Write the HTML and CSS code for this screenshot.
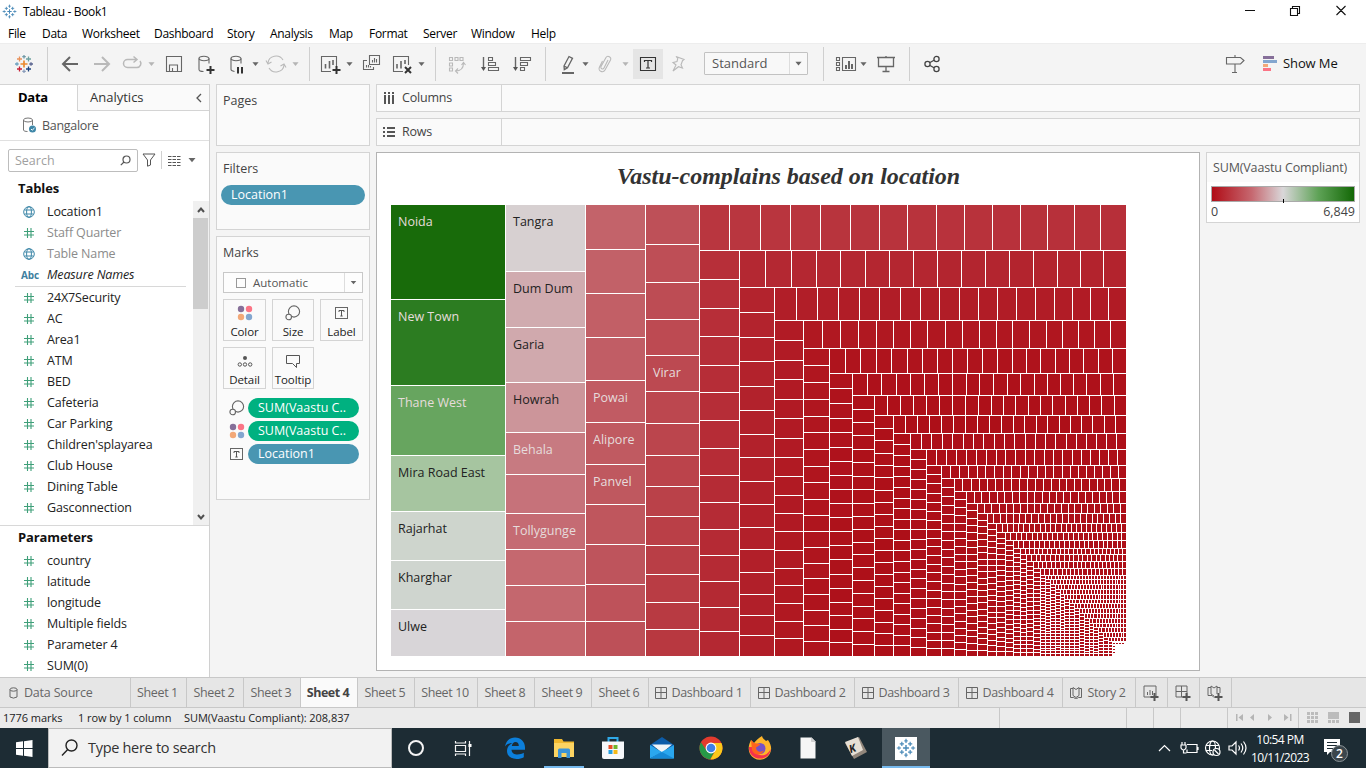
FILE: index.html
```html
<!DOCTYPE html>
<html lang="en">
<head>
<meta charset="utf-8">
<title>Tableau - Book1</title>
<link rel="stylesheet" href="styles.css">
</head>
<body>
<svg class="defs" width="0" height="0">
  <defs>
    <symbol id="caret" viewBox="0 0 8 24"><path d="M.5 10h7l-3.500 4.200z" fill="currentColor"/></symbol>
    <symbol id="hash" viewBox="0 0 12 12"><path d="M4.5 1v10M8 1v10M1 4.5h10M1 8h10" stroke="#3f9f79" stroke-width="1.1" fill="none"/></symbol>
    <symbol id="globe" viewBox="0 0 12 12"><g fill="none" stroke="#3e87a8" stroke-width="1"><circle cx="6" cy="6" r="5.300"/><ellipse cx="6" cy="6" rx="2.4" ry="5.300"/><path d="M1.5 4h9M1.5 8h9"/></g></symbol>
    <symbol id="size" viewBox="0 0 16 16"><g fill="none" stroke="#666" stroke-width="1.1"><circle cx="9" cy="6.500" r="5.600"/><circle cx="3.700" cy="12" r="2.800" fill="#fafafa"/></g></symbol>
    <symbol id="color" viewBox="0 0 16 16"><circle cx="4" cy="4" r="3.200" fill="#866f99"/><circle cx="12" cy="4" r="3.200" fill="#fb7485"/><circle cx="4" cy="12" r="3.200" fill="#f2a878"/><circle cx="12" cy="12" r="3.200" fill="#83a6cf"/></symbol>
    <symbol id="label" viewBox="0 0 16 16"><rect x="1.5" y="2.5" width="12" height="11" fill="none" stroke="#666"/><path d="M5 7V5.500h5V7M7.500 5.500v5.500M6.300 11h2.400" fill="none" stroke="#555"/></symbol>
    <symbol id="grid" viewBox="0 0 12 12"><path d="M.5.5h11v11H.5zM6 .5v11M.5 5.500h11" fill="none" stroke="#666"/></symbol>
    <symbol id="story" viewBox="0 0 12 12"><path d="M3 1.500H.5v9h3L6 12l2.500-1.500h3v-9H9M3 .5L6 2.500 9 .5M3 .5v8L6 10.500l3-2v-8" fill="none" stroke="#666"/></symbol>
    <symbol id="plusmarks" viewBox="0 0 24 24"><g fill="none" stroke-width="1.3">
      <path d="M12 8.500v7M8.500 12h7" stroke="#eb8a2f" stroke-width="1.700"/>
      <path d="M7.500 4.500v5M5 7h5" stroke="#e8915a"/><path d="M16.500 4.500v5M14 7h5" stroke="#6ea1a0"/>
      <path d="M7.500 14.500v5M5 17h5" stroke="#c72037"/><path d="M16.500 14.500v5M14 17h5" stroke="#1f447e"/>
      <path d="M12 3v3.500M10.300 4.700h3.500" stroke="#7099a6"/><path d="M12 17.500V21M10.300 19.300h3.500" stroke="#8a9dbb"/>
      <path d="M5 10.300v3.500M3 12h3.700" stroke="#6ea1c0"/><path d="M19 10.300v3.500M17.300 12H21" stroke="#5b6591"/></g></symbol>
    <symbol id="plusblue" viewBox="0 0 24 24"><g fill="none" stroke="#4a8ab8" stroke-width="1.400">
      <path d="M12 8.500v7M8.500 12h7" stroke-width="1.700"/><path d="M7 4.500v5M4.500 7h5M17 4.500v5M14.500 7h5M7 14.500v5M4.500 17h5M17 14.500v5M14.500 17h5M12 1v5M10 3.500h4M12 18v5M10 20.500h4M3.500 10v4M1 12h5M20.500 10v4M18 12h5"/></g></symbol>
  </defs>
</svg>

<header class="titlebar">
  <svg class="app-icon" viewBox="0 0 24 24"><use href="#plusblue"/></svg>
  <span class="app-name">Tableau - Book1</span>
  <svg class="win-buttons" viewBox="0 0 120 22" fill="none" stroke="#111"><path d="M5 10.500h10M50.500 8.500h7v7h-7zM52.500 8V6.500h7v7H58M96.500 6l9 9M105.500 6l-9 9" stroke-width="1.100"/></svg>
</header>
<nav class="menubar">
  <span>File</span><span>Data</span><span>Worksheet</span><span>Dashboard</span><span>Story</span><span>Analysis</span><span>Map</span><span>Format</span><span>Server</span><span>Window</span><span>Help</span>
</nav>

<div class="toolbar">
  <svg class="ic"><use href="#plusmarks"/></svg>
  <i class="sep"></i>
  <svg class="ic"><path d="M20 12H5M12 5l-7 7 7 7" stroke-width="2"/></svg>
  <svg class="ic dim"><path d="M4 12h15M12 5l7 7-7 7" stroke-width="2"/></svg>
  <svg class="ic dim"><path d="M16 7.500H7.500a4 4 0 0 0 0 8h9.500a4 4 0 0 0 3-6.500M13.500 4.500l3.500 3-3.500 3" stroke-width="1.500"/></svg>
  <svg class="caret dim"><use href="#caret"/></svg>
  <svg class="ic"><path d="M4.500 4.500h15v15h-15zM7.500 19v-6h8v6M10.500 19v-3"/></svg>
  <svg class="ic"><g><ellipse cx="10" cy="6.500" rx="5" ry="2.200"/><path d="M5 6.500v11c0 1 2 2 4.500 2M15 6.500v5"/></g><path d="M16.500 14v8M12.500 18h8" stroke="#333" stroke-width="2"/></svg>
  <svg class="ic"><g><ellipse cx="10" cy="6.500" rx="5" ry="2.200"/><path d="M5 6.500v11c0 1 1 1.500 3.500 2M15 6.500v5"/></g><path d="M12 15v6.500M16 15v6.500" stroke="#333" stroke-width="2"/></svg>
  <svg class="caret"><use href="#caret"/></svg>
  <svg class="ic dim"><path d="M4 11a8 7.500 0 0 1 15-3M20 13a8 7.500 0 0 1-15 3M2 8.500L4 12l3.500-2M22 15.500L20 12l-3.500 2"/></svg>
  <svg class="caret dim"><use href="#caret"/></svg>
  <i class="sep"></i>
  <svg class="ic"><path d="M13 19.500H3.500v-15h15V14"/><path d="M7.500 12v4.500M11.500 9v7.500M15 8v5" stroke-width="1.600"/><path d="M18.500 14v8M14.500 18h8" stroke="#333" stroke-width="2"/></svg>
  <svg class="caret"><use href="#caret"/></svg>
  <svg class="ic"><path d="M9.500 3.500h10v9h-10zM7 8.500H3.500v9h10V15M12.500 8v2.500M14.500 6v4.500M16.500 7v3.500M6.500 13v2.500M8.500 13v2.500M10.500 14v1.500"/></svg>
  <svg class="ic"><path d="M12 19.500H2.500v-15h15V13"/><path d="M6 12v4.500M10 9v7.500M14 8v4" stroke-width="1.600"/><path d="M14 15l6 6M20 15l-6 6" stroke="#333" stroke-width="2"/></svg>
  <svg class="caret"><use href="#caret"/></svg>
  <i class="sep"></i>
  <svg class="ic dim"><path d="M4.500 5.500h3v3h-3zM10 5.500h3v3h-3zM15 5.500h3v3h-3zM4.500 11h3v3h-3zM4.500 16h3v3h-3zM18.500 11c0 5-3 8-8 8M16.500 13l2-2.500 2 2.500M13 16.500l-2.500 2.500 2.500 2.500"/></svg>
  <svg class="ic"><path d="M5.500 5v12" stroke-width="1.400"/><path d="M3 15h5l-2.500 4z" fill="#555" stroke="none"/><path d="M10.500 5.500h4v3h-4zM10.500 10.500h7v3h-7zM10.500 15.500h10v3h-10z"/></svg>
  <svg class="ic"><path d="M5.500 5v12" stroke-width="1.400"/><path d="M3 15h5l-2.500 4z" fill="#555" stroke="none"/><path d="M10.500 5.500h10v3h-10zM10.500 10.500h7v3h-7zM10.500 15.500h4v3h-4z"/></svg>
  <i class="sep"></i>
  <svg class="ic"><path d="M8 14l5-9.500 3.500 1.800-5 9.500-3.200 1.800zM8 14l3.500 1.800" stroke-width="1.300"/><path d="M6 21h12" stroke-width="2"/></svg>
  <svg class="caret"><use href="#caret"/></svg>
  <svg class="ic dim"><path d="M15 8l-4 8c-1 2-4 .5-3-1.500l5-9c1.500-2.500 6-.5 4.500 2.500l-5.500 10c-2 3.500-7.500 1-5.500-3l3-6"/></svg>
  <svg class="caret dim"><use href="#caret"/></svg>
  <span class="toggle"><svg class="ic"><path d="M4.500 5.500h15v13h-15z" stroke="#333"/><path d="M8.500 10V8.500h7V10M12 8.500V16M10 16h4" stroke="#333" stroke-width="1.200"/></svg></span>
  <svg class="ic dim"><path d="M10 4.500l8 3-1.500 1.200-1.500 4 1.500 3.300-4-1.300L7 19l3-6-3-2.500 4-1 .8-3z"/></svg>
  <span class="fit"><b>Standard</b><svg class="caret"><use href="#caret"/></svg></span>
  <i class="sep"></i>
  <svg class="ic"><path d="M2.500 5.500h3v3h-3zM2.500 10.500h3v3h-3zM2.500 15.500h3v3h-3zM8.500 5.500h13v13h-13z"/><path d="M12 13v4M15 9v8M18 12v5" stroke-width="2"/></svg>
  <svg class="caret"><use href="#caret"/></svg>
  <svg class="ic"><path d="M3 5.500h18M4.500 5.500v9h15v-9M12 4v2M12 14.500v5M8.500 19.500h7" stroke-width="1.300"/></svg>
  <i class="sep"></i>
  <svg class="ic"><g stroke-width="1.300" stroke="#444"><circle cx="16.500" cy="7" r="2.600"/><circle cx="7.500" cy="12" r="2.600"/><circle cx="16.500" cy="17" r="2.600"/><path d="M10 10.500l4-2.300M10 13.500l4 2.300"/></g></svg>
  <svg class="ic"><path d="M3.500 5.500h14l3.500 3-3.500 3.500h-14zM12 3v2.500M12 12v8.500M9 20.500h5"/></svg>
  <span class="showme"><svg width="15" height="16"><path d="M1 0h11v3H1z" fill="#866f99"/><path d="M1 4h14v3H1z" fill="#83a6cf"/><path d="M1 8h5v3H1z" fill="#f2a878"/><path d="M1 12h8v3H1z" fill="#fb7485"/></svg><span>Show Me</span></span>
</div>

<main class="workspace">
  <aside class="data-pane">
    <div class="pane-tabs"><b>Data</b><span>Analytics<svg width="8" height="10"><path d="M6 1L2 5l4 4" fill="none" stroke="#555" stroke-width="1.300"/></svg></span></div>
    <div class="source"><svg width="16" height="17" fill="none" stroke="#777"><ellipse cx="6" cy="3" rx="4.500" ry="2"/><path d="M1.500 3v10c0 1 2 1.500 4 1.500M10.500 3v5"/><circle cx="10.500" cy="12" r="3.500" fill="#3e87a8" stroke="none"/><path d="M9 12l1.200 1.200L12.500 11" stroke="#fff"/></svg><span>Bangalore</span></div>
    <div class="finder">
      <div class="search-box"><span>Search</span><svg width="11" height="11" fill="none" stroke="#555" stroke-width="1.200"><circle cx="6.500" cy="4.500" r="3.500"/><path d="M4 7L.8 10.200"/></svg></div>
      <svg class="funnel" width="14" height="14"><path d="M1 1h12L8.500 7v5l-3 1.200V7z" fill="none" stroke="#555"/></svg>
      <i></i>
      <svg class="listicon" width="13" height="11"><path d="M0 1.500h13M0 4.500h13M0 7.500h13M0 10.500h13" stroke="#555" stroke-dasharray="3.500 1"/></svg>
      <svg class="caret"><use href="#caret"/></svg>
    </div>
    <h2>Tables</h2>
    <div class="tables">
      <ul class="fields" id="tables"></ul>
      <div class="scroll"><svg width="16" height="16"><path d="M5 11l3-3.500 3 3.500" fill="none" stroke="#505050" stroke-width="2"/></svg><i></i><svg width="16" height="16"><path d="M5 6l3 3.500L11 6" fill="none" stroke="#505050" stroke-width="2"/></svg></div>
    </div>
    <h2 class="params-title">Parameters</h2>
    <ul class="fields params" id="params"></ul>
  </aside>

  <section class="cards">
    <div class="card pages"><h3>Pages</h3></div>
    <div class="card filters"><h3>Filters</h3><div class="pill blue">Location1</div></div>
    <div class="card marks"><h3>Marks</h3>
      <div class="mark-type"><i></i><span>Automatic</span><svg class="caret"><use href="#caret"/></svg></div>
      <div class="mark-buttons">
        <div><svg><use href="#color"/></svg>Color</div>
        <div><svg><use href="#size"/></svg>Size</div>
        <div><svg><use href="#label"/></svg>Label</div>
        <div><svg><circle cx="8" cy="5" r="2" fill="#555"/><g fill="none" stroke="#555"><circle cx="2.800" cy="11.500" r="1.700"/><circle cx="8" cy="11.500" r="1.700"/><circle cx="13.200" cy="11.500" r="1.700"/></g></svg>Detail</div>
        <div><svg><path d="M1.500 2.500h13v8h-3v4l-4-4h-6z" fill="none" stroke="#555"/></svg>Tooltip</div>
      </div>
      <div class="encodings">
        <svg><use href="#size"/></svg><div class="pill green">SUM(Vaastu C..</div>
        <svg><use href="#color"/></svg><div class="pill green">SUM(Vaastu C..</div>
        <svg><use href="#label"/></svg><div class="pill blue">Location1</div>
      </div>
    </div>
  </section>

  <section class="canvas">
    <div class="shelf"><span><svg width="12" height="12"><path d="M2 0v2M6 0v2M10 0v2M2 3v9M6 3v9M10 3v9" stroke="#555" stroke-width="2"/></svg>Columns</span></div>
    <div class="shelf"><span><svg width="12" height="12"><path d="M0 2h2M0 6h2M0 10h2M4 2h8M4 6h8M4 10h8" stroke="#555" stroke-width="2"/></svg>Rows</span></div>
    <div class="view-row">
      <div class="view"><h1>Vastu-complains based on location</h1><svg id="treemap" width="736" height="452" viewBox="391 205 736 452" shape-rendering="crispEdges"></svg></div>
      <div class="legend"><h3>SUM(Vaastu Compliant)</h3><div class="ramp-box"><div class="ramp"><i></i></div><div class="range"><span>0</span><span>6,849</span></div></div></div>
    </div>
  </section>
</main>

<div class="sheet-tabs">
  <span class="ds"><svg width="9" height="12"><ellipse cx="4.500" cy="2.500" rx="3.500" ry="1.700" fill="none" stroke="#666"/><path d="M1 2.500v7.500q3.500 2.200 7 0V2.500" fill="none" stroke="#666"/></svg>Data Source</span>
  <span>Sheet 1</span><span>Sheet 2</span><span>Sheet 3</span><span class="active">Sheet 4</span><span>Sheet 5</span><span>Sheet 10</span><span>Sheet 8</span><span>Sheet 9</span><span>Sheet 6</span>
  <span><svg><use href="#grid"/></svg>Dashboard 1</span><span><svg><use href="#grid"/></svg>Dashboard 2</span><span><svg><use href="#grid"/></svg>Dashboard 3</span><span><svg><use href="#grid"/></svg>Dashboard 4</span><span><svg><use href="#story"/></svg>Story 2</span>
  <span class="add"><svg viewBox="0 0 16 16"><path d="M1 1h12v11H1zM4.500 7v3M7 5v5M9.500 6v4" fill="none" stroke="#666"/><path d="M11.500 8v8M7.500 12h8" stroke="#555" stroke-width="2"/></svg></span>
  <span class="add"><svg viewBox="0 0 16 16"><path d="M1 1h11v11H1zM6.500 1v11M1 6.500h11" fill="none" stroke="#666"/><path d="M11.500 8v8M7.500 12h8" stroke="#555" stroke-width="2"/></svg></span>
  <span class="add"><svg viewBox="0 0 16 16"><path d="M4 2.500H1v8h4l2 2M10 2.500h3V8M4 1v8l3 2M4 1l3 2 3-2v8" fill="none" stroke="#666"/><path d="M11.500 8v8M7.500 12h8" stroke="#555" stroke-width="2"/></svg></span>
</div>
<div class="statusbar">
  <span>1776 marks</span><span>1 row by 1 column</span><span>SUM(Vaastu Compliant): 208,837</span><i></i><i></i><i></i><i></i>
  <svg class="nav" width="71" height="20"><path d="M10 6v7h1.500V6zM17 6v7l-4.500-3.500zM28 6v7l-4-3.500zM42 6v7l4-3.500zM58 6v7l4.500-3.500zM64 6v7h1.500V6z" fill="#b5b5b5" transform="translate(-2)"/></svg>
  <svg class="views" width="68" height="20"><g fill="#bcbcbc" transform="translate(-1)"><path d="M9 4h3v3H9zM13 4h3v3h-3zM17 4h3v3h-3zM9 8h3v3H9zM13 8h3v3h-3zM17 8h3v3h-3zM9 12h3v3H9zM13 12h3v3h-3zM17 12h3v3h-3zM30 4h11v7H30zM30 12h3v3h-3zM34 12h3v3h-3zM38 12h3v3h-3z"/></g><path d="M50 4h11v11H50z" fill="#666"/></svg>
</div>

<footer class="taskbar">
  <div class="start"><svg width="17" height="17" fill="#fff"><path d="M0 2.300L7 1.300V8H0zM8 1.200L16.500 0v8H8zM0 9h7v6.700l-7-1zM8 9h8.500v8L8 15.800z"/></svg></div>
  <div class="tb-search"><svg width="17" height="18" fill="none" stroke="#222" stroke-width="1.400"><circle cx="10.500" cy="6.500" r="5.500"/><path d="M6.700 10.500L1 16.500"/></svg>Type here to search</div>
  <div><svg viewBox="0 0 24 24"><circle cx="12" cy="12" r="7" fill="none" stroke="#f4f4f4" stroke-width="2"/></svg></div>
  <div class="shift"><svg viewBox="0 0 24 24" fill="none" stroke="#f4f4f4" stroke-width="1.200"><path d="M4.500 5V7h10V5M4.500 9.500h10v6h-10zM4.500 20v-2h10v2M18.500 5v15"/><path d="M17.500 8h3v3h-3z" fill="#fff" stroke="none"/></svg></div>
  <div><svg viewBox="0 0 24 24"><path d="M2 10.500C3 4.500 7 1.500 12 1.500c6 0 10 4.500 10 10v2.200H8.500c.2 3.500 3 4.700 6 4.700 2.500 0 4.500-.6 6.300-1.700v4.500C19 22.200 16.500 23 13.500 23 7.500 23 4 19.500 4 15c0-4 2.500-6.500 5.500-8C6.500 7 4 8 2 10.500zM8.800 10h7c0-2.500-1.200-4-3.300-4S9.200 7.700 8.800 10z" fill="#0c7fdb"/></svg></div>
  <div class="open"><svg viewBox="0 0 24 24"><path d="M2 3h8l1.500 2.500H22V20H2z" fill="#f0b82f"/><path d="M2 7h20v14H2z" fill="#fcd462"/><path d="M6 22v-8q0-1.500 1.500-1.500h9Q18 12.500 18 14v8h-3.500v-5h-5v5z" fill="#3c94d8"/></svg></div>
  <div><svg viewBox="0 0 24 24"><path d="M7.500 6V2h9v4" fill="none" stroke="#2fa9e8" stroke-width="2"/><path d="M1 5.500h22V21q0 2-2 2H3q-2 0-2-2z" fill="#f6f8fa"/><path d="M7.500 9h4v4h-4z" fill="#e84d26"/><path d="M12.500 9h4v4h-4z" fill="#6fb52c"/><path d="M7.500 14h4v4h-4z" fill="#249fe0"/><path d="M12.500 14h4v4h-4z" fill="#f5b916"/></svg></div>
  <div><svg viewBox="0 0 24 24"><path d="M0 9L12 1l12 8v3H0z" fill="#0d5ca8"/><path d="M2 8.500h20L12 17z" fill="#f1f5f8"/><path d="M0 9l12 7-12 6.500z" fill="#2aa7ee"/><path d="M24 9L0 22.500h24z" fill="#2aa7ee"/><path d="M12 16l12 6.500H0z" fill="#1689d6"/></svg></div>
  <div><svg viewBox="0 0 24 24"><circle cx="12" cy="12" r="11.500" fill="#e33b2e"/><path d="M2 6.300a11.500 11.500 0 0 0 9 17.200l5-8.700-8.500-.3z" fill="#279847"/><path d="M12 7h10.400a11.500 11.500 0 0 1-11 16.500l5-9z" fill="#fbc81a"/><circle cx="12" cy="12" r="5.400" fill="#fff"/><circle cx="12" cy="12" r="4.300" fill="#3f7fe8"/></svg></div>
  <div><svg viewBox="0 0 24 24"><path d="M14 0c1 3 2 3 4 5l2-1c4 6 4 10 1 15-5 7-15 6-19-1C-.5 13 1 8 3 4l3 3c2-2 4-5 8-7z" fill="#ffb52a"/><path d="M1 11c-1 13 19 17 22 2-4 6-7 7-11 6-4-.8-6-4-5-8z" fill="#f4324d"/><circle cx="12" cy="12.500" r="5.500" fill="#7651c8"/><path d="M3 4l3 3 6 1c0 2-3 2-4 4 1 5 6 4 8 2-2 6-10 6-12 0z" fill="#ff641d"/></svg></div>
  <div><svg viewBox="0 0 24 24"><path d="M4.500 1.500h11l4 4v17h-15z" fill="#f6f6f6"/><path d="M15.500 1.500v4h4" fill="#d2d2d2" stroke="#bbb" stroke-width=".5"/></svg></div>
  <div><svg viewBox="0 0 24 24"><path d="M1 7l14-6 8 15-13 7z" fill="#91867b"/><path d="M1 6l13-5 5 13-11 6z" fill="#e7e0d5"/><text x="5" y="16" class="key" transform="rotate(-20 9 12)">K</text></svg></div>
  <div class="current"><svg viewBox="0 0 24 24"><path d="M1 1h22v23H1z" fill="#fff"/></svg><svg class="over" viewBox="0 0 24 24"><use href="#plusblue"/></svg></div>
  <div class="tray"><svg width="96" height="24" fill="none" stroke="#fff" stroke-width="1.200"><path d="M6 15l5.500-5.500L17 15"/><path d="M34 8.500h10v8H34v-3M29 6v3M32 6v3M28 9h5v3q-1 2-2.500 2T28 12zM30.500 14v3h3M45 11v3"/><circle cx="59.500" cy="12" r="7"/><ellipse cx="59.500" cy="12" rx="3" ry="7"/><path d="M53 9.500h13M53 14.500h6"/><circle cx="63.500" cy="16" r="3.500" fill="#1d2c34"/><path d="M61.500 14l4 4"/><path d="M76 10h3l4-4v12l-4-4h-3zM85.500 9.500q2 2.500 0 5M88 7.500q3.500 4.500 0 9M90.500 5.500q5 6.500 0 13"/></svg></div>
  <div class="clock"><span>10:54 PM</span><span>10/11/2023</span></div>
  <div class="notes"><svg width="28" height="28"><path d="M1 4h16v13H7l-3 3v-3H1z" fill="#fff"/><path d="M4 7.500h10M4 10.500h10M4 13.500h8" stroke="#1d2c34"/><circle cx="16.500" cy="18.500" r="8" fill="#3b464c" stroke="#8c9498"/><text x="13" y="23" class="badge">2</text></svg></div>
</footer>
<script src="app.js"></script>
</body>
</html>
```
FILE: styles.css
```css
* { box-sizing: border-box; }
body { margin: 0; width: 1366px; height: 768px; overflow: hidden; background: #f4f4f4; font: 12.5px/16px "Open Sans", "Noto Sans", sans-serif; color: #333; }
h1, h2, h3, ul { margin: 0; padding: 0; font-weight: 400; }
.defs { position: absolute; }
.titlebar { height: 22px; background: #fff; display: flex; align-items: center; padding-left: 2px; color: #000; font-size: 12px; }
.app-icon { width: 15px; height: 15px; }
.app-name { margin-left: 6px; padding-top: 1px; letter-spacing: -.37px; flex: 1; }
.win-buttons { width: 120px; height: 22px; margin-right: 6px; }
.menubar { height: 21px; background: #fff; display: grid; grid-template-columns: 34px 40px 72px 73px 43px 59px 40px 54px 48px 60px auto; padding: 4px 0 0 8px; color: #000; font-size: 12px; letter-spacing: -.3px; }

.toolbar { height: 41px; border-top: 1px solid #ededed; padding: 8px 0 0 12px; display: grid; grid-template-columns: 35px 11px 32px 30px 28px 14px 32px 32px 26px 12px 28px 17px 9px 28px 14px 31px 27px 17px 10px 33px 32px 35px 11px 26px 11px 29px 11px 33px 38px 119px 11px 26px 14px 35px 11px 303px 39px auto; }
.ic { width: 24px; height: 24px; fill: none; stroke: #666; stroke-width: 1.1; }
.ic.dim { stroke: #b9b9b9; }
.caret { width: 8px; height: 24px; color: #666; }
.toolbar > .caret { width: 7px; }
.caret.dim { color: #b5b5b5; }
.sep { width: 1px; height: 34px; margin-top: -5px; background: #cfcfcf; }
.toggle { width: 30px; height: 30px; margin-top: -3px; padding: 3px; background: #e5e5e5; }
.fit { display: flex; width: 104px; height: 23px; border: 1px solid #c2c2c2; border-radius: 1px; background: #f8f8f8; padding-left: 7px; }
.fit b { flex: 1; font-weight: 400; line-height: 21px; color: #555; font-size: 13px; }
.fit .caret { width: 18px; height: 21px; border-left: 1px solid #ddd; }
.showme { display: flex; padding-top: 4px; font-size: 13px; gap: 6px; line-height: 15px; color: #111; letter-spacing: -.1px; }

.workspace { display: flex; height: 593px; }
.data-pane { width: 210px; background: #fff; border-top: 1px solid #d4d4d4; border-right: 1px solid #d0d0d0; }
.pane-tabs { display: flex; height: 26px; font-size: 13px; line-height: 25px; color: #333; }
.pane-tabs b { width: 77px; padding-left: 18px; color: #000; letter-spacing: -.3px; }
.pane-tabs span { flex: 1; display: flex; justify-content: space-between; align-items: center; padding: 0 6px 0 12px; background: #fafafa; border-left: 1px solid #d4d4d4; border-bottom: 1px solid #d4d4d4; }
.source { height: 30px; display: flex; align-items: center; gap: 4px; padding-left: 22px; color: #555; border-bottom: 1px solid #e0e0e0; letter-spacing: -.3px; }
.finder { display: flex; align-items: center; height: 24px; margin-top: 7px; padding-left: 8px; }
.search-box { display: flex; align-items: center; justify-content: space-between; width: 130px; height: 23px; border: 1px solid #bdbdbd; border-radius: 2px; padding: 1px 6px 0 6px; color: #a0a0a0; }
.funnel { margin-left: 4px; }
.finder i { width: 1px; height: 18px; background: #d0d0d0; margin-left: 5px; }
.listicon { margin: 0 7px 0 6px; }
.data-pane h2 { font-weight: 700; font-size: 13px; line-height: 18px; color: #111; padding-left: 18px; margin-top: 7px; height: 22px; letter-spacing: -.1px; }
.tables { display: flex; height: 325px; border-bottom: 1px solid #d8d8d8; }
.fields { flex: 1; list-style: none; color: #222; letter-spacing: -.14px; }
.fields li { display: flex; align-items: center; height: 21px; padding-left: 23px; }
.fields li span { padding-top: 1px; }
.fields li svg { width: 12px; height: 12px; margin-right: 12px; }
.fields .abc { width: 26px; margin-left: -2px; font-size: 10px; font-weight: 700; font-style: normal; color: #3e7fa0; }
.fields .muted { color: #8b8b8b; }
.fields .italic { font-style: italic; }
.fields .rule { height: 1px; margin: 1px 7px 0 15px; border-top: 1px solid #d8d8d8; padding: 0; }
.scroll { width: 16px; background: #f0f0f0; display: flex; flex-direction: column; }
.scroll i { height: 91px; margin: 1px 1px 200px 0; background: #cdcdcd; }
.data-pane .params-title { margin-top: 2px; height: 22px; }

.cards { width: 154px; margin-left: 6px; display: flex; flex-direction: column; gap: 6px; }
.card, .shelf { border: 1px solid #d4d4d4; background: #fafafa; }
.card h3 { font-size: 12.5px; height: 23px; padding: 8px 0 0 6px; color: #444; }
.pages { height: 62px; }
.filters { height: 78px; }
.marks { height: 264px; }
.pill { height: 20px; border-radius: 10px; padding-left: 10px; line-height: 20px; color: #fff; }
.blue { background: #4996b2; }
.green { background: #00b180; }
.filters .pill { margin: 9px 4px 0; }
.mark-type { display: flex; align-items: center; height: 21px; width: 140px; margin: 12px 0 0 6px; border: 1px solid #c8c8c8; background: #fdfdfd; color: #555; font-size: 11.5px; }
.mark-type i { width: 10px; height: 10px; border: 1px solid #999; margin: 0 7px 0 12px; }
.mark-type span { flex: 1; padding-top: 1px; }
.mark-type .caret { width: 18px; height: 19px; border-left: 1px solid #ddd; }
.mark-buttons { display: grid; grid-template-columns: 43px 42px 43px; gap: 6px; margin: 6px 0 0 6px; color: #222; font-size: 11.5px; letter-spacing: -.1px; }
.mark-buttons div { height: 42px; border: 1px solid #d4d4d4; display: flex; flex-direction: column; align-items: center; padding-top: 5px; gap: 3px; line-height: 16px; white-space: nowrap; }
.mark-buttons svg, .encodings svg { width: 16px; height: 16px; flex: none; }
.encodings { display: grid; grid-template-columns: 19px 111px; gap: 3px 0; align-items: center; margin: 9px 0 0 12px; }

.canvas { flex: 1; margin-left: 6px; display: flex; flex-direction: column; gap: 6px; }
.shelf { width: 984px; height: 28px; }
.shelf span { display: flex; align-items: center; gap: 7px; width: 125px; height: 26px; padding-left: 6px; border-right: 1px solid #d4d4d4; color: #444; letter-spacing: -.2px; }
.view-row { display: flex; gap: 6px; }
.view { width: 824px; height: 519px; background: #fff; border: 1px solid #b3b3b3; padding: 0 0 0 14px; }
.view h1 { width: 795px; height: 52px; text-align: center; font: italic bold 24px/47px "Liberation Serif", serif; color: #333; }
#treemap { display: block; }
#treemap text { font-size: 12.5px; }
.legend { width: 154px; height: 71px; border: 1px solid #d4d4d4; background: #fafafa; }
.legend h3 { height: 29px; padding: 7px 0 0 6px; color: #555; white-space: nowrap; font-size: 12.5px; letter-spacing: -.15px; }
.ramp-box { background: #fff; height: 40px; padding: 4px 4px 0; }
.ramp { height: 16px; border: 1px solid #aaa; background: linear-gradient(90deg, #b00c16, #c66870 28%, #d9d7d9 50%, #5ea256 75%, #136806); }
.ramp i { display: block; width: 1px; height: 4px; margin: 12px 0 0 71px; background: #000; }
.range { display: flex; justify-content: space-between; line-height: 20px; color: #444; }

.sheet-tabs { height: 31px; border-top: 1px solid #c8c8c8; border-bottom: 1px solid #c8c8c8; background: #e6e6e6; display: grid; grid-template-columns: 131px 56px 57px 57px 57px 57px 63px 57px 57px 57px 102px 104px 104px 104px 73px 32px 32px 32px; color: #666; }
.sheet-tabs span { border-right: 1px solid #c8c8c8; display: flex; align-items: center; justify-content: center; gap: 5px; padding-right: 2px; white-space: nowrap; letter-spacing: -.37px; }
.sheet-tabs svg { width: 12px; height: 12px; }
.sheet-tabs .add svg { width: 16px; height: 16px; }
.sheet-tabs .ds { justify-content: flex-start; padding-left: 9px; gap: 3px; letter-spacing: -.2px; }
.sheet-tabs .ds svg { width: 12px; }
.sheet-tabs .active { background: #fafafa; font-weight: 700; color: #444; letter-spacing: -.45px; }
.statusbar { height: 20px; background: #ebebeb; display: grid; grid-template-columns: 75px 106px 815px 127px 27px 27px 47px 71px 68px; padding-left: 3px; font-size: 11px; line-height: 20px; color: #222; }
.statusbar span { letter-spacing: -.05px; }
.statusbar i, .statusbar svg { border-left: 1px solid #c8c8c8; }

.taskbar { height: 40px; background: #1d2c34; display: grid; grid-template-columns: 48px 344px 48px 51px 48px 49px 49px 49px 49px 49px 48px 48px 53px 316px 62px 55px; grid-template-rows: 40px; }
.taskbar > div { display: flex; align-items: center; justify-content: center; }
.taskbar > div > svg[viewBox] { width: 24px; height: 24px; }
.taskbar .shift { padding-right: 5px; }
.taskbar .tb-search { justify-content: flex-start; gap: 10px; padding-left: 12px; background: #f2f2f2; border: 1px solid #bbb; font-size: 14.5px; letter-spacing: -.3px; color: #333; }
.taskbar .open { box-shadow: inset 0 -2px #76b9ed; width: 40px; justify-self: center; }
.taskbar .current { width: 48px; justify-self: start; position: relative; background: #4a5860; box-shadow: inset 0 -2px #76b9ed; margin-left: 2px; }
.taskbar .over { position: absolute; left: 12px; top: 8px; padding: 2px; }
.taskbar .tray { justify-content: flex-end; }
.taskbar .clock { flex-direction: column; color: #fff; font-size: 12px; line-height: 18px; letter-spacing: -.55px; padding-top: 1px; }
.taskbar .notes { justify-content: flex-start; padding: 2px 0 0 12px; }
.key { font: italic bold 11px "Open Sans", sans-serif; fill: #222; }
.badge { font: 600 12px "Open Sans", sans-serif; fill: #fff; }
```
FILE: app.js
```js
const icon = (id) => `<svg><use href="#${id}"/></svg>`;
const row = (name, id = 'hash', cls = '') =>
  `<li class="${cls}">${id === 'abc' ? '<b class="abc">Abc</b>' : icon(id)}<span>${name}</span></li>`;
document.getElementById('tables').innerHTML =
  row('Location1', 'globe') + row('Staff Quarter', 'hash', 'muted') + row('Table Name', 'globe', 'muted') +
  row('Measure Names', 'abc', 'italic') + '<li class="rule"></li>' +
  ['24X7Security', 'AC', 'Area1', 'ATM', 'BED', 'Cafeteria', 'Car Parking', "Children'splayarea", 'Club House', 'Dining Table', 'Gasconnection'].map(n => row(n)).join('');
document.getElementById('params').innerHTML =
  ['country', 'latitude', 'longitude', 'Multiple fields', 'Parameter 4', 'SUM(0)'].map(n => row(n)).join('');

// Treemap: every number is the pixel of a divider between two cells.
const RIGHT = 1126, BOTTOM = 656;
let out = '';
const hex = (c) => [1, 3, 5].map(i => parseInt(c.slice(i, i + 2), 16));
const mix = (a, b, t) => { const p = hex(a), q = hex(b); return `rgb(${p.map((v, i) => Math.round(v + (q[i] - v) * t))})`; };
const rect = (x, y, x2, y2, fill) => { if (x2 > x && y2 > y) out += `<rect x="${x}" y="${y}" width="${x2 - x}" height="${y2 - y}" fill="${fill}"/>`; };
const label = (x, y, s, light) => { out += `<text x="${x + 7}" y="${y + 20.5}" fill="${light ? '#e6dcdc' : '#222'}">${s}</text>`; };
const grade = (from, to, n) => {
  const a = [], len = to - from;
  for (let i = 1; i < n; i++) { const t = i / n; a.push(Math.round(from + len * (t + 0.07 * t * (1 - t)))); }
  return a;
};
function column(left, right, top, lines, colors, names = {}) {
  const b = [top, ...lines, BOTTOM];
  for (let i = 0; i < b.length - 1; i++) {
    const c = colors.length > 2 ? colors[i] : mix(colors[0], colors[1], i / (b.length - 2));
    rect(left + 1, b[i] + 1, right, b[i + 1], c);
    if (names[i]) label(left + 1, b[i] + 1, names[i][0], names[i][1]);
  }
}
function band(left, top, bottom, lines, colors) {
  const b = [left, ...lines, RIGHT];
  for (let i = 0; i < b.length - 1; i++) rect(b[i] + 1, top + 1, b[i + 1], bottom, mix(colors[0], colors[1], i / (b.length - 2)));
}
column(390, 505, 204, [299, 385, 455, 511, 560, 609], ['#186b0a', '#2c7c21', '#67a55f', '#a6c5a0', '#ced5cd', '#cfd5cf', '#d8d5d8'],
  { 0: ['Noida', 1], 1: ['New Town', 1], 2: ['Thane West', 1], 3: ['Mira Road East'], 4: ['Rajarhat'], 5: ['Kharghar'], 6: ['Ulwe'] });
column(505, 585, 204, [271, 327, 382, 432, 474, 513, 549, 585, 621], ['#d7d0d1', '#d0abaf', '#d0a9ad', '#cc959a', '#c77a81', '#c6727a', '#c56b73', '#c5686f', '#c4676e', '#c4646b'],
  { 0: ['Tangra'], 1: ['Dum Dum'], 2: ['Garia'], 3: ['Howrah'], 4: ['Behala', 1], 6: ['Tollygunge', 1] });
column(585, 645, 204, [249, 293, 337, 380, 422, 464, 504, 544, 584, 621], ['#c3636a', '#bd5058'], { 4: ['Powai', 1], 5: ['Alipore', 1], 6: ['Panvel', 1] });
column(645, 699, 204, [244, 282, 319, 355, 391, 423, 455, 486, 516, 545, 574, 602, 629], ['#be5058', '#b83840'], { 4: ['Virar', 1] });

const xs = [739, 774, 803, 829, 852, 874, 893, 910, 926, 941, 954, 966, 977, 987, 996, 1005, 1013, 1020, 1026, 1033, 1040, 1045, 1050, 1055, 1060, 1064, 1069, 1074, 1079, 1084, 1089, 1093, 1098, 1103, 1108];
const ys = [250, 287, 320, 348, 373, 395, 415, 433, 449, 465, 478, 491, 503, 513, 523, 532, 540, 548, 554, 561, 568, 575, 579, 584, 589, 594, 599, 603, 608, 613, 618, 623, 627, 632, 637];
const bands = [
  [729, 760, 790, 820, 850, 879, 907, 936, 964, 992, 1020, 1047, 1074, 1100],
  [765, 791, 816, 840, 865, 889, 913, 937, 961, 985, 1009, 1033, 1057, 1080, 1103],
  [796, 817, 838, 859, 879, 900, 920, 939, 959, 978, 997, 1016, 1035, 1054, 1072, 1090, 1108],
  [822, 840, 858, 876, 893, 910, 927, 945, 962, 979, 996, 1012, 1029, 1046, 1062, 1078, 1094, 1110],
  [845, 860, 876, 891, 907, 922, 937, 952, 967, 982, 997, 1012, 1026, 1040, 1055, 1069, 1083, 1098, 1112],
  [867, 881, 896, 910, 924, 938, 952, 966, 979, 993, 1007, 1020, 1034, 1047, 1060, 1073, 1086, 1100, 1113],
  [887, 900, 913, 926, 939, 952, 965, 978, 991, 1003, 1015, 1028, 1040, 1052, 1065, 1077, 1089, 1101, 1114],
  [905, 917, 929, 941, 953, 965, 977, 989, 1001, 1013, 1024, 1036, 1047, 1059, 1070, 1081, 1092, 1104, 1115],
  [921, 931, 942, 952, 963, 973, 983, 994, 1004, 1014, 1025, 1035, 1045, 1055, 1066, 1076, 1086, 1096, 1106, 1116]];
const stacks = [
  [279, 308, 336, 365, 392, 420, 448, 475, 502, 529, 555, 581, 607, 631],
  [312, 337, 361, 386, 410, 434, 457, 481, 504, 527, 549, 572, 594, 615, 635],
  [340, 360, 379, 399, 418, 438, 457, 476, 495, 513, 531, 550, 568, 585, 603, 621, 638],
  [365, 382, 399, 416, 432, 449, 466, 482, 499, 515, 531, 547, 563, 578, 594, 610, 625, 641],
  [388, 403, 418, 432, 447, 461, 475, 489, 503, 517, 531, 545, 559, 574, 588, 602, 615, 629, 642],
  [409, 422, 435, 449, 462, 476, 489, 503, 516, 529, 542, 554, 567, 580, 593, 606, 618, 631, 644],
  [428, 440, 453, 465, 477, 490, 502, 514, 526, 538, 550, 562, 574, 586, 598, 610, 622, 633, 645],
  [444, 455, 466, 476, 487, 498, 508, 519, 529, 540, 550, 561, 572, 582, 593, 603, 614, 624, 635, 645],
  [459, 469, 479, 489, 499, 509, 519, 529, 539, 549, 559, 569, 578, 588, 598, 608, 618, 628, 637, 647]];
const bandCounts = [21, 22, 22, 22, 22, 23, 25, 24, 23, 25, 22, 22, 21];
const stackCounts = [22, 21, 22, 22, 23, 23, 24, 24, 25, 24, 22, 22, 27];
const shades = ['#b9363f', '#b42832', '#b11e28', '#b01821', '#af141d', '#ae111b', '#ae1019', '#ad0f18'];
const shade = (k) => shades[Math.min(k, 7)];
xs.forEach((x, k) => {
  const left = k ? xs[k - 1] : 699, top = k ? ys[k - 1] : 204, y = ys[k];
  const n = (counts, len) => counts[k - 9] || Math.round(len / 3);
  const mid = mix(shade(k), shade(k + 1), .5).match(/\d+/g).map(v => (+v).toString(16).padStart(2, '0')).join('');
  band(left, top, y, bands[k] || grade(left, RIGHT, n(bandCounts, RIGHT - left)), [shade(k), '#' + mid]);
  column(left, x, y, stacks[k] || grade(y, BOTTOM, n(stackCounts, BOTTOM - y)), ['#' + mid, shade(k + 1)]);
});
for (let x = 1109; x < 1126; x += 3) rect(x, 638, x + 2, 641, '#ad0f18');
for (let y = 642; y < 656; y += 3) rect(1109, y, 1112, y + 2, '#ad0f18');
for (let i = 0; i < 4; i++) { rect(1113, 643 + i * 3, 1115, 644 + i * 3, '#ad0f18'); rect(1113 + i * 3, 643, 1115 + i * 3, 644, '#ad0f18'); }
document.getElementById('treemap').innerHTML = out;
```
